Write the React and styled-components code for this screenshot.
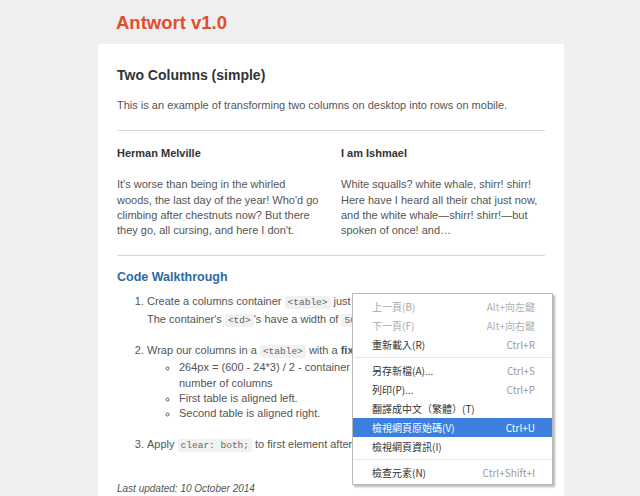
import React from "react";
import styled, { createGlobalStyle } from "styled-components";

const Global = createGlobalStyle`
  html, body { margin: 0; padding: 0; background: #efefef; }
  body { font-family: "Liberation Sans", Arial, sans-serif; color: #444; overflow: hidden; }
`;

const Page = styled.div`
  position: relative;
  width: 640px;
  height: 496px;
  overflow: hidden;
  padding-left: 98px;
  box-sizing: border-box;
`;

const Column = styled.div`
  width: 466px;
`;

const Brand = styled.h1`
  margin: 0;
  height: 44px;
  box-sizing: border-box;
  padding: 12px 0 0 18px;
  font-size: 18.5px;
  line-height: 22px;
  font-weight: bold;
  color: #e04e2c;
`;

const Card = styled.main`
  background: #fff;
  padding: 22px 19px 40px;
  min-height: 460px;
  box-sizing: border-box;
`;

const Title = styled.h2`
  margin: 0 0 14px;
  font-size: 14px;
  line-height: 18px;
  color: #333;
`;

const Text = styled.p`
  margin: 0;
  font-size: 11px;
  line-height: 15.3px;
  color: #555;
`;

const Rule = styled.hr`
  border: 0;
  border-top: 1px solid #d8d8d8;
  margin: ${p => p.$top}px 0 ${p => p.$bottom}px;
`;

const Cols = styled.div`
  display: grid;
  grid-template-columns: 1fr 1fr;
  column-gap: 20px;
`;

const ColTitle = styled.h3`
  margin: 0 0 16px;
  font-size: 11px;
  line-height: 15px;
  font-weight: bold;
  color: #333;
`;

const SubTitle = styled.h2`
  margin: 0 0 7px;
  font-size: 12.5px;
  line-height: 16px;
  color: #2f6aa0;
`;

const Steps = styled.ol`
  margin: 0;
  padding-left: 30px;
  font-size: 11px;
  color: #555;
  line-height: 18px;
`;

const Step = styled.li`
  margin-bottom: ${p => p.$gap || 13}px;
`;

const Bullets = styled.ul`
  margin: 1px 0 0;
  padding-left: 32px;
  list-style: circle;
  line-height: 15.3px;
`;

const Code = styled.code`
  font-family: "Liberation Mono", "Courier New", monospace;
  font-size: 9.5px;
  line-height: 1;
  color: #666;
  background: #f1f1f1;
  padding: 1px 3px;
  border-radius: 2px;
`;

const Updated = styled.p`
  margin: 30px 0 0;
  font-size: 10px;
  font-style: italic;
  color: #555;
`;

const Menu = styled.ul`
  position: absolute;
  left: 352px;
  top: 293px;
  width: 201px;
  margin: 0;
  padding: 3px 0 2px;
  list-style: none;
  background: #fff;
  border: 1px solid #b9b9b9;
  box-shadow: 2px 2px 2px rgba(0,0,0,0.28);
  box-sizing: border-box;
  font-family: "Noto Sans CJK TC", "Liberation Sans", sans-serif;
  font-size: 10px;
`;

const Item = styled.li`
  display: flex;
  justify-content: space-between;
  align-items: center;
  height: 19px;
  padding: 0 17px 0 19px;
  color: ${p => (p.$active ? "#fff" : p.$disabled ? "#a8a8a8" : "#333")};
  background: ${p => (p.$active ? "#3c7fde" : "transparent")};
`;

const Shortcut = styled.span`
  color: ${p => (p.$active ? "#fff" : p.$disabled ? "#b0b0b0" : "#999")};
`;

const Sep = styled.li`
  height: 1px;
  background: #e6e6e6;
  margin: 3px 1px 3px;
`;

const menu = [
  { label: "上一頁(B)", key: "Alt+向左鍵", disabled: true },
  { label: "下一頁(F)", key: "Alt+向右鍵", disabled: true },
  { label: "重新載入(R)", key: "Ctrl+R" },
  "sep",
  { label: "另存新檔(A)...", key: "Ctrl+S" },
  { label: "列印(P)...", key: "Ctrl+P" },
  { label: "翻譯成中文（繁體）(T)", key: "" },
  { label: "檢視網頁原始碼(V)", key: "Ctrl+U", active: true },
  { label: "檢視網頁資訊(I)", key: "" },
  "sep",
  { label: "檢查元素(N)", key: "Ctrl+Shift+I" },
];

export default function App() {
  return (
    <Page>
      <Global />
      <Column>
        <Brand>Antwort v1.0</Brand>
        <Card>
          <Title>Two Columns (simple)</Title>
          <Text>This is an example of transforming two columns on desktop into rows on mobile.</Text>
          <Rule $top={17} $bottom={15} />
          <Cols>
            <div>
              <ColTitle>Herman Melville</ColTitle>
              <Text>It's worse than being in the whirled woods, the last day of the year! Who'd go climbing after chestnuts now? But there they go, all cursing, and here I don't.</Text>
            </div>
            <div>
              <ColTitle>I am Ishmael</ColTitle>
              <Text>White squalls? white whale, shirr! shirr! Here have I heard all their chat just now, and the white whale—shirr! shirr!—but spoken of once! and…</Text>
            </div>
          </Cols>
          <Rule $top={17} $bottom={13} />
          <SubTitle>Code Walkthrough</SubTitle>
          <Steps>
            <Step>
              Create a columns container <Code>&lt;table&gt;</Code> just like the one-column layout.
              <br />
              The container's <Code>&lt;td&gt;</Code>'s have a width of <Code>50%</Code>.
            </Step>
            <Step $gap={13}>
              Wrap our columns in a <Code>&lt;table&gt;</Code> with a <b>fixed width</b>.
              <Bullets>
                <li>264px = (600 - 24*3) / 2 - container width minus padding divided by number of columns</li>
                <li>First table is aligned left.</li>
                <li>Second table is aligned right.</li>
              </Bullets>
            </Step>
            <Step $gap={0}>
              Apply <Code>clear: both;</Code> to first element after the columns.
            </Step>
          </Steps>
          <Updated>Last updated: 10 October 2014</Updated>
        </Card>
      </Column>
      <Menu>
        {menu.map((m, i) =>
          m === "sep" ? (
            <Sep key={i} />
          ) : (
            <Item key={i} $active={m.active} $disabled={m.disabled}>
              <span>{m.label}</span>
              <Shortcut $active={m.active} $disabled={m.disabled}>{m.key}</Shortcut>
            </Item>
          )
        )}
      </Menu>
    </Page>
  );
}
